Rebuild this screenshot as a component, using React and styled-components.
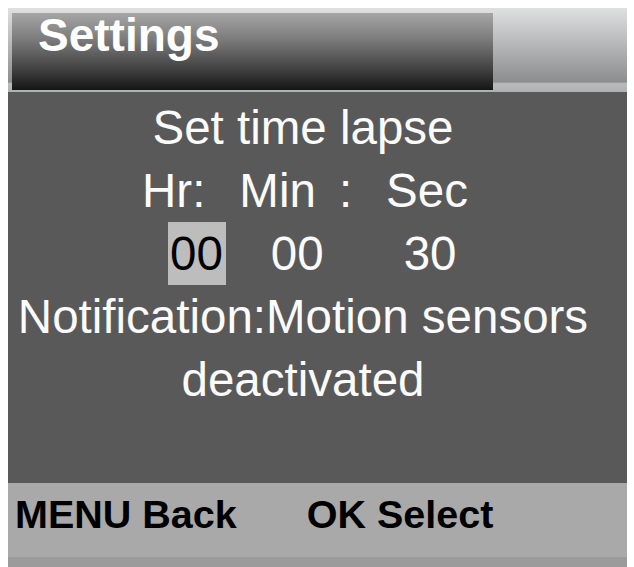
import styled, { createGlobalStyle } from "styled-components";

const GlobalStyle = createGlobalStyle`
  html, body {
    margin: 0;
    padding: 0;
    background: #ffffff;
  }
  body {
    font-family: "Liberation Sans", Arial, sans-serif;
  }
`;

const Screen = styled.div`
  width: 619px;
  height: 559px;
  margin: 8px 0 0 8px;
  display: flex;
  flex-direction: column;
  background: #595959;
`;

const Header = styled.div`
  height: 84px;
  display: flex;
  padding: 5px 0 0 4px;
  box-sizing: border-box;
  background: linear-gradient(
    to bottom,
    #e0e0e0 0%,
    #c2c4c5 30%,
    #8c8d8e 88%,
    #b7bbbb 90%,
    #aeb2b2 100%
  );
`;

const TitleBar = styled.div`
  width: 481px;
  height: 77px;
  padding-left: 26px;
  box-sizing: border-box;
  background: linear-gradient(
    to bottom,
    #a6a6a6 0%,
    #7a7a7a 35%,
    #3e3e3e 75%,
    #151515 100%
  );
`;

const Title = styled.h1`
  margin: 0;
  font-size: 46px;
  line-height: 44px;
  font-weight: bold;
  color: #ffffff;
`;

const Body = styled.div`
  flex: 1;
  padding: 4px 29px 0 0;
  color: #fbfbfb;
  font-size: 47.5px;
  line-height: 63px;
`;

const Line = styled.div`
  text-align: center;
  white-space: nowrap;
`;

const Row = styled.div`
  display: flex;
  height: 63px;
  padding-left: 134px;
  white-space: nowrap;
`;

const Cell = styled.span`
  display: inline-block;
  margin-left: ${(p) => p.$gap || 0}px;
  padding: ${(p) => (p.$selected ? "0 3px 0 2px" : "0")};
  background: ${(p) => (p.$selected ? "#bdbdbd" : "transparent")};
  color: ${(p) => (p.$selected ? "#000000" : "inherit")};
`;

const Footer = styled.div`
  height: 84px;
  display: flex;
  gap: 70px;
  padding: 12px 0 0 7px;
  box-sizing: border-box;
  background: #a9a9a9;
  border-bottom: 10px solid #9b9b9b;
  font-size: 39.5px;
  line-height: 39px;
  font-weight: bold;
  color: #000000;
`;

export default function App() {
  return (
    <>
      <GlobalStyle />
      <Screen>
        <Header>
          <TitleBar>
            <Title>Settings</Title>
          </TitleBar>
        </Header>
        <Body>
          <Line>Set time lapse</Line>
          <Row>
            <Cell>Hr</Cell>
            <Cell>:</Cell>
            <Cell $gap={34}>Min</Cell>
            <Cell $gap={23}>:</Cell>
            <Cell $gap={34}>Sec</Cell>
          </Row>
          <Row>
            <Cell $gap={26} $selected>
              00
            </Cell>
            <Cell $gap={45}>00</Cell>
            <Cell $gap={80}>30</Cell>
          </Row>
          <Line>Notification:Motion sensors</Line>
          <Line>deactivated</Line>
        </Body>
        <Footer>
          <span>MENU Back</span>
          <span>OK Select</span>
        </Footer>
      </Screen>
    </>
  );
}
